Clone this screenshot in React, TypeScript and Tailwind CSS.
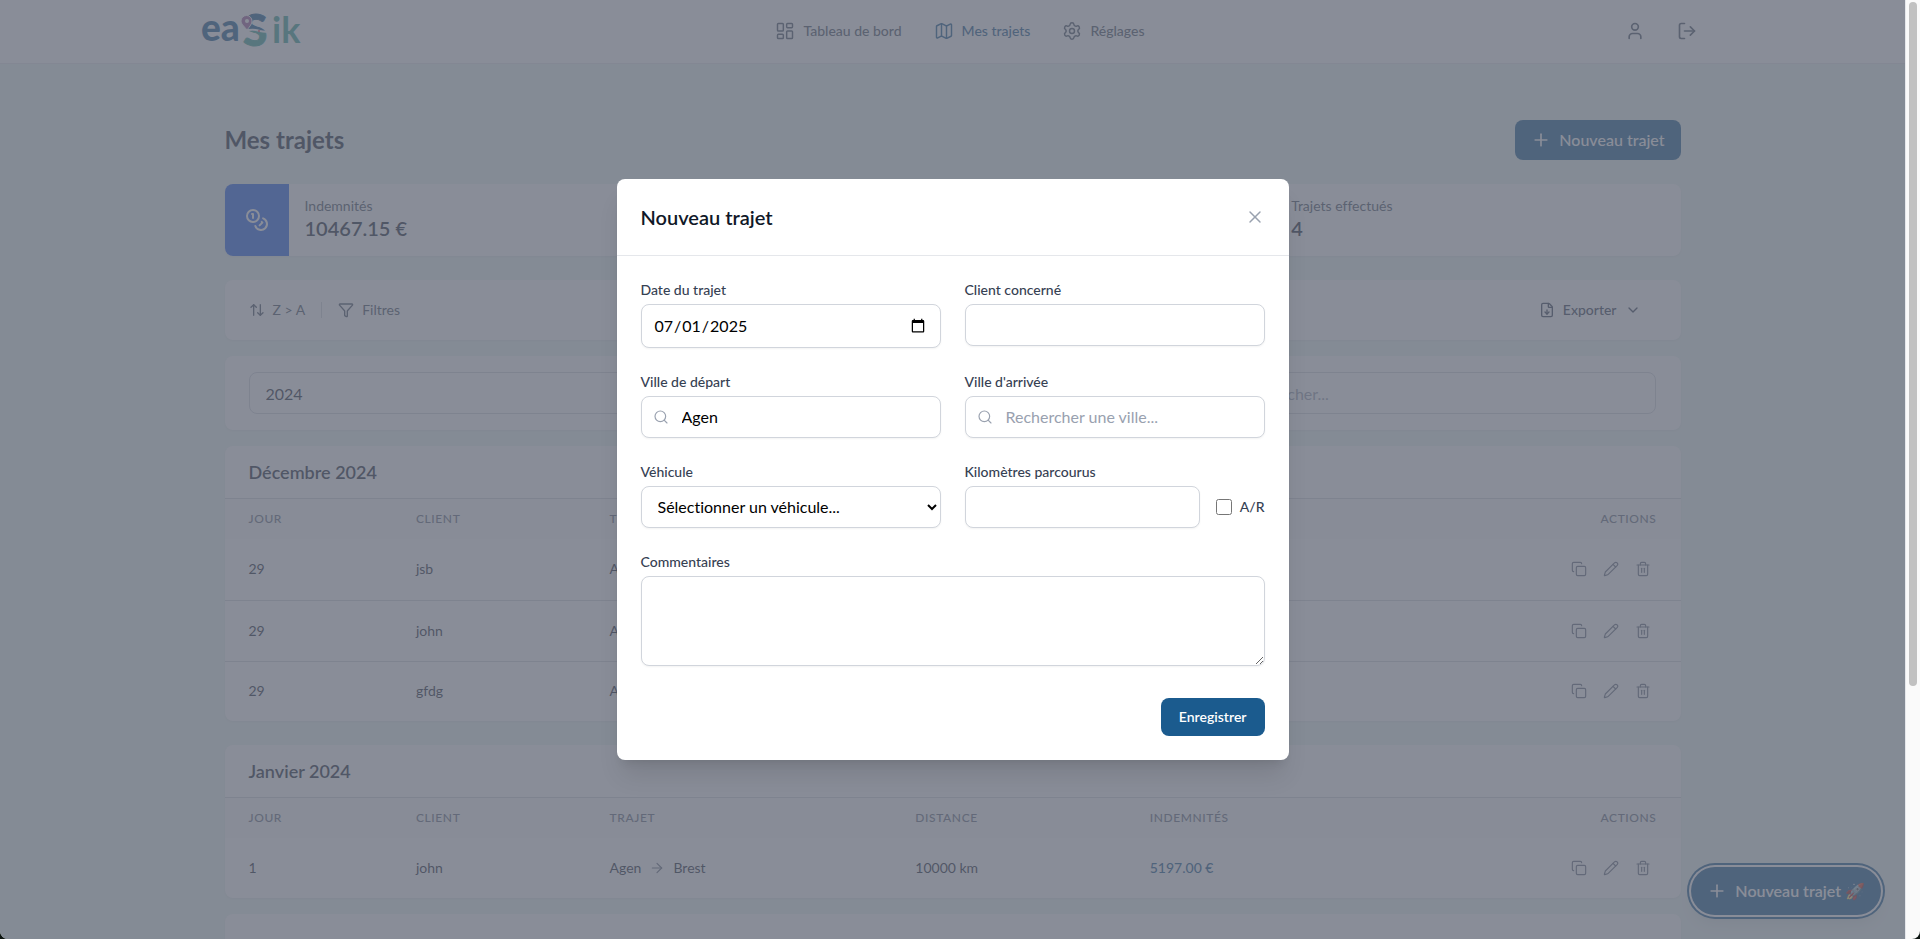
import { ReactNode, useState } from "react"
import {
    ArrowRight,
    ArrowUpDown,
    ChevronDown,
    Coins,
    Copy,
    FileDown,
    Funnel,
    LayoutDashboard,
    LogOut,
    Map,
    Pencil,
    Plus,
    Search,
    Settings,
    Trash2,
    User,
    X,
} from "lucide-react"

type Trip = {
    id: number
    day: number
    client: string
    from: string
    to: string
    distance: string
    amount: string
}

type Month = {
    title: string
    trips: Array<Trip>
}

const months: Array<Month> = [
    {
        title: "Décembre 2024",
        trips: [
            { id: 1, day: 29, client: "jsb", from: "Agen", to: "Brest", distance: "1000 km", amount: "529.00 €" },
            { id: 2, day: 29, client: "john", from: "Agen", to: "Brest", distance: "1000 km", amount: "529.00 €" },
            { id: 3, day: 29, client: "gfdg", from: "Agen", to: "Brest", distance: "1000 km", amount: "529.00 €" },
        ],
    },
    {
        title: "Janvier 2024",
        trips: [
            { id: 4, day: 1, client: "john", from: "Agen", to: "Brest", distance: "10000 km", amount: "5197.00 €" },
        ],
    },
]

const fieldClass = "block w-full rounded-lg border border-gray-300 bg-white text-base text-black shadow-xs placeholder:text-gray-400"
const labelClass = "mb-1 block text-sm font-medium text-gray-700"
const cardClass = "rounded-lg bg-white shadow-xs"

const Logo = () => (
    <svg width="103" height="62" viewBox="0 0 103 62" role="img" aria-label="easik">
        <defs>
            <linearGradient id="road" x1="0" y1="15" x2="0" y2="47" gradientUnits="userSpaceOnUse">
                <stop offset="50%" stopColor="#1b5b8e" />
                <stop offset="50%" stopColor="#3fa397" />
            </linearGradient>
        </defs>
        <g fontFamily="Lato, sans-serif" fontWeight="900">
            <text x="0" y="41" fontSize="37" fill="#1b5b8e">ea</text>
            <text x="42" y="46" fontSize="44" stroke="url(#road)" strokeWidth="1" fill="url(#road)">S</text>
            <text x="71" y="43" fontSize="36" fontWeight="700" fill="#3fa397">ik</text>
        </g>
        {/* road running through the S */}
        <path d="M43 31c7-2 11-2 16 0 4 1 7 1 10 0" fill="none" stroke="#fff" strokeWidth="2" />
        <circle cx="58" cy="31" r="1" fill="#e0455a" />
        <path d="M46 30c-3-4-6-6-6-9a5 5 0 0 1 11 0c0 3-2 5-5 9z" fill="#a0629e" stroke="#fff" strokeWidth="1" />
        <circle cx="46" cy="21" r="2" fill="#fff" />
    </svg>
)

const Navbar = () => (
    <header className="border-b border-gray-200 bg-white pb-px">
        <div className="mx-auto flex h-[62px] max-w-screen-2xl items-center justify-between px-4">
            <a href="#accueil"><Logo /></a>
            <nav className="flex gap-8 text-sm font-medium text-gray-600">
                <a href="#tableau" className="flex items-center gap-2">
                    <LayoutDashboard size={20} strokeWidth={1.75} />
                    Tableau de bord
                </a>
                <a href="#trajets" className="flex items-center gap-2 text-[#1b5b8e]">
                    <Map size={20} strokeWidth={1.75} />
                    Mes trajets
                </a>
                <a href="#reglages" className="flex items-center gap-2">
                    <Settings size={20} strokeWidth={1.75} />
                    Réglages
                </a>
            </nav>
            <div className="flex gap-4 text-gray-600">
                <button type="button" aria-label="Profil" className="p-2"><User size={20} /></button>
                <button type="button" aria-label="Déconnexion" className="p-2"><LogOut size={20} /></button>
            </div>
        </div>
    </header>
)

const StatCard = ({ label, value }: { label: string; value: string }) => (
    <div className={"flex overflow-hidden " + cardClass}>
        <div className="flex w-16 items-center justify-center bg-[#2563eb] text-white">
            <Coins size={24} />
        </div>
        <div className="px-4 py-3">
            <p className="text-sm text-gray-600">{label}</p>
            <p className="text-xl leading-6 font-semibold text-gray-800">{value}</p>
        </div>
    </div>
)

const MonthTable = ({ month }: { month: Month }) => (
    <section className={"overflow-hidden " + cardClass}>
        <h2 className="border-b border-gray-300 px-6 py-3 text-lg leading-7 font-semibold text-gray-800">{month.title}</h2>
        <table className="w-full table-fixed text-left">
            <thead className="bg-gray-50">
                <tr className="h-10 text-xs tracking-wider text-gray-500 uppercase">
                    <th className="w-[11.5%] px-6 font-medium">Jour</th>
                    <th className="w-[13.3%] px-6 font-medium">Client</th>
                    <th className="w-[21%] px-6 font-medium">Trajet</th>
                    <th className="w-[16.1%] px-6 font-medium">Distance</th>
                    <th className="px-6 font-medium">Indemnités</th>
                    <th className="px-6 text-right font-medium">Actions</th>
                </tr>
            </thead>
            <tbody className="divide-y divide-gray-300 text-sm text-gray-800">
                {month.trips.map((trip) => (
                    <tr key={trip.id} className="h-[61px] last:h-15">
                        <td className="px-6">{trip.day}</td>
                        <td className="px-6">{trip.client}</td>
                        <td className="px-6">
                            <div className="flex items-center gap-2">
                                {trip.from}
                                <ArrowRight size={16} strokeWidth={1.75} className="text-gray-500" />
                                {trip.to}
                            </div>
                        </td>
                        <td className="px-6">{trip.distance}</td>
                        <td className="px-6 font-medium text-[#1b5b8e]">{trip.amount}</td>
                        <td className="px-6">
                            <div className="flex justify-end gap-1 text-gray-500">
                                <button type="button" aria-label="Dupliquer" className="p-1.5"><Copy size={16} strokeWidth={1.75} /></button>
                                <button type="button" aria-label="Modifier" className="p-1.5"><Pencil size={16} strokeWidth={1.75} /></button>
                                <button type="button" aria-label="Supprimer" className="p-1.5"><Trash2 size={16} strokeWidth={1.75} /></button>
                            </div>
                        </td>
                    </tr>
                ))}
            </tbody>
        </table>
    </section>
)

const Field = ({ id, label, children }: { id: string; label: string; children: ReactNode }) => (
    <div>
        <label htmlFor={id} className={labelClass}>{label}</label>
        {children}
    </div>
)

const CityInput = ({ id, value }: { id: string; value?: string }) => (
    <div className="relative">
        <Search size={16} strokeWidth={1.75} className="absolute top-[13px] left-3 text-gray-400" />
        <input id={id} type="text" defaultValue={value} placeholder="Rechercher une ville..." className={"h-[42px] pr-3 pl-10 " + fieldClass} />
    </div>
)

const TripModal = ({ onClose }: { onClose: () => void }) => (
    <div className="absolute inset-0 flex items-center justify-center bg-[#626775]/75 pb-px">
        <div role="dialog" aria-labelledby="modal-title" className="w-full max-w-2xl rounded-lg bg-white shadow-xl">
            <div className="flex items-center justify-between border-b border-gray-200 p-6">
                <h2 id="modal-title" className="text-xl leading-7 font-semibold text-gray-900">Nouveau trajet</h2>
                <button type="button" aria-label="Fermer" onClick={onClose} className="text-gray-400">
                    <X size={20} strokeWidth={1.75} />
                </button>
            </div>
            <form className="p-6" onSubmit={(e) => e.preventDefault()}>
                <div className="grid grid-cols-2 gap-6">
                    <Field id="date" label="Date du trajet">
                        <input id="date" type="date" defaultValue="2025-07-01" className={"h-11 px-3 " + fieldClass} />
                    </Field>
                    <Field id="client" label="Client concerné">
                        <input id="client" type="text" className={"h-[42px] px-3 " + fieldClass} />
                    </Field>
                    <Field id="depart" label="Ville de départ">
                        <CityInput id="depart" value="Agen" />
                    </Field>
                    <Field id="arrivee" label="Ville d'arrivée">
                        <CityInput id="arrivee" />
                    </Field>
                    <Field id="vehicule" label="Véhicule">
                        <select id="vehicule" className={"h-[42px] px-3 " + fieldClass}>
                            <option>Sélectionner un véhicule...</option>
                        </select>
                    </Field>
                    <Field id="km" label="Kilomètres parcourus">
                        <div className="flex items-center gap-4">
                            <input id="km" type="text" className={"h-[42px] min-w-0 flex-1 px-3 " + fieldClass} />
                            <label className="flex items-center gap-2 text-sm font-medium text-gray-700">
                                <input type="checkbox" className="size-4" />
                                A/R
                            </label>
                        </div>
                    </Field>
                    <div className="col-span-2">
                        <Field id="commentaires" label="Commentaires">
                            <textarea id="commentaires" className={"h-[90px] px-3 py-2 " + fieldClass} />
                        </Field>
                    </div>
                </div>
                <div className="mt-8 flex justify-end">
                    <button type="submit" className="h-[38px] rounded-lg bg-[#1b5b8e] px-[18px] text-sm font-semibold text-white">
                        Enregistrer
                    </button>
                </div>
            </form>
        </div>
    </div>
)

export default function App() {
    const [open, setOpen] = useState(true)

    return (
        <div className="flex h-screen overflow-hidden bg-[#0c1410] font-[Lato,'Noto_Sans',sans-serif] [font-variant-ligatures:none]">
            <div className="relative flex-1 overflow-hidden rounded-bl-lg bg-[#ebf5f2]">
                <Navbar />
                <main className="mx-auto max-w-screen-2xl px-10 pt-14">
                    <div className="flex items-center justify-between">
                        <h1 className="text-2xl font-bold text-gray-800">Mes trajets</h1>
                        <button type="button" onClick={() => setOpen(true)} className="flex h-10 items-center gap-2 rounded-lg bg-[#1b5b8e] px-4 font-medium text-white">
                            <Plus size={20} />
                            Nouveau trajet
                        </button>
                    </div>

                    <div className="mt-6 grid h-[72px] grid-cols-3 gap-6">
                        <StatCard label="Indemnités" value="10467.15 €" />
                        <StatCard label="Distance" value="20000 km" />
                        <StatCard label="Trajets effectués" value="4" />
                    </div>

                    <div className={"mt-6 flex h-15 items-center justify-between px-6 text-sm text-gray-600 " + cardClass}>
                        <div className="flex items-center gap-4">
                            <button type="button" className="flex items-center gap-2">
                                <ArrowUpDown size={16} />
                                Z &gt; A
                            </button>
                            <span className="h-4 w-px bg-gray-300" />
                            <button type="button" className="flex items-center gap-2">
                                <Funnel size={16} />
                                Filtres
                            </button>
                        </div>
                        <button type="button" className="flex items-center gap-2 px-4 font-medium text-gray-700">
                            <FileDown size={16} />
                            Exporter
                            <ChevronDown size={16} />
                        </button>
                    </div>

                    <div className={"mt-4 grid grid-cols-3 gap-4 px-6 py-4 " + cardClass}>
                        <input aria-label="Année" type="text" defaultValue="2024" className="h-[42px] rounded-lg border border-gray-300 px-4 text-gray-800" />
                        <input aria-label="Client" type="text" className="h-[42px] rounded-lg border border-gray-300 px-4 text-gray-800" />
                        <input aria-label="Rechercher" type="search" placeholder="Rechercher..." className="h-[42px] rounded-lg border border-gray-300 pr-4 pl-10 placeholder:text-gray-400" />
                    </div>

                    <div className="mt-4 mb-4 flex flex-col gap-6">
                        {months.map((month) => <MonthTable key={month.title} month={month} />)}
                    </div>
                    <section className={"h-40 " + cardClass} />
                </main>

                <button
                    type="button"
                    onClick={() => setOpen(true)}
                    className="absolute right-6 bottom-6 flex h-12 items-center gap-2 rounded-full bg-[#1b5b8e] px-4 font-semibold text-white shadow-lg ring-2 ring-[#1b5b8e] ring-offset-2"
                >
                    <Plus size={20} />
                    Nouveau trajet 🚀
                </button>

                {open && <TripModal onClose={() => setOpen(false)} />}
            </div>

            {/* scroll rail */}
            <div className="w-[15px] rounded-br-lg border-l border-gray-200 bg-[#fafafa] px-[3px] pt-0.5">
                <div className="h-[73%] w-2 rounded-full bg-[#c1c1c1]" />
            </div>
        </div>
    )
}
